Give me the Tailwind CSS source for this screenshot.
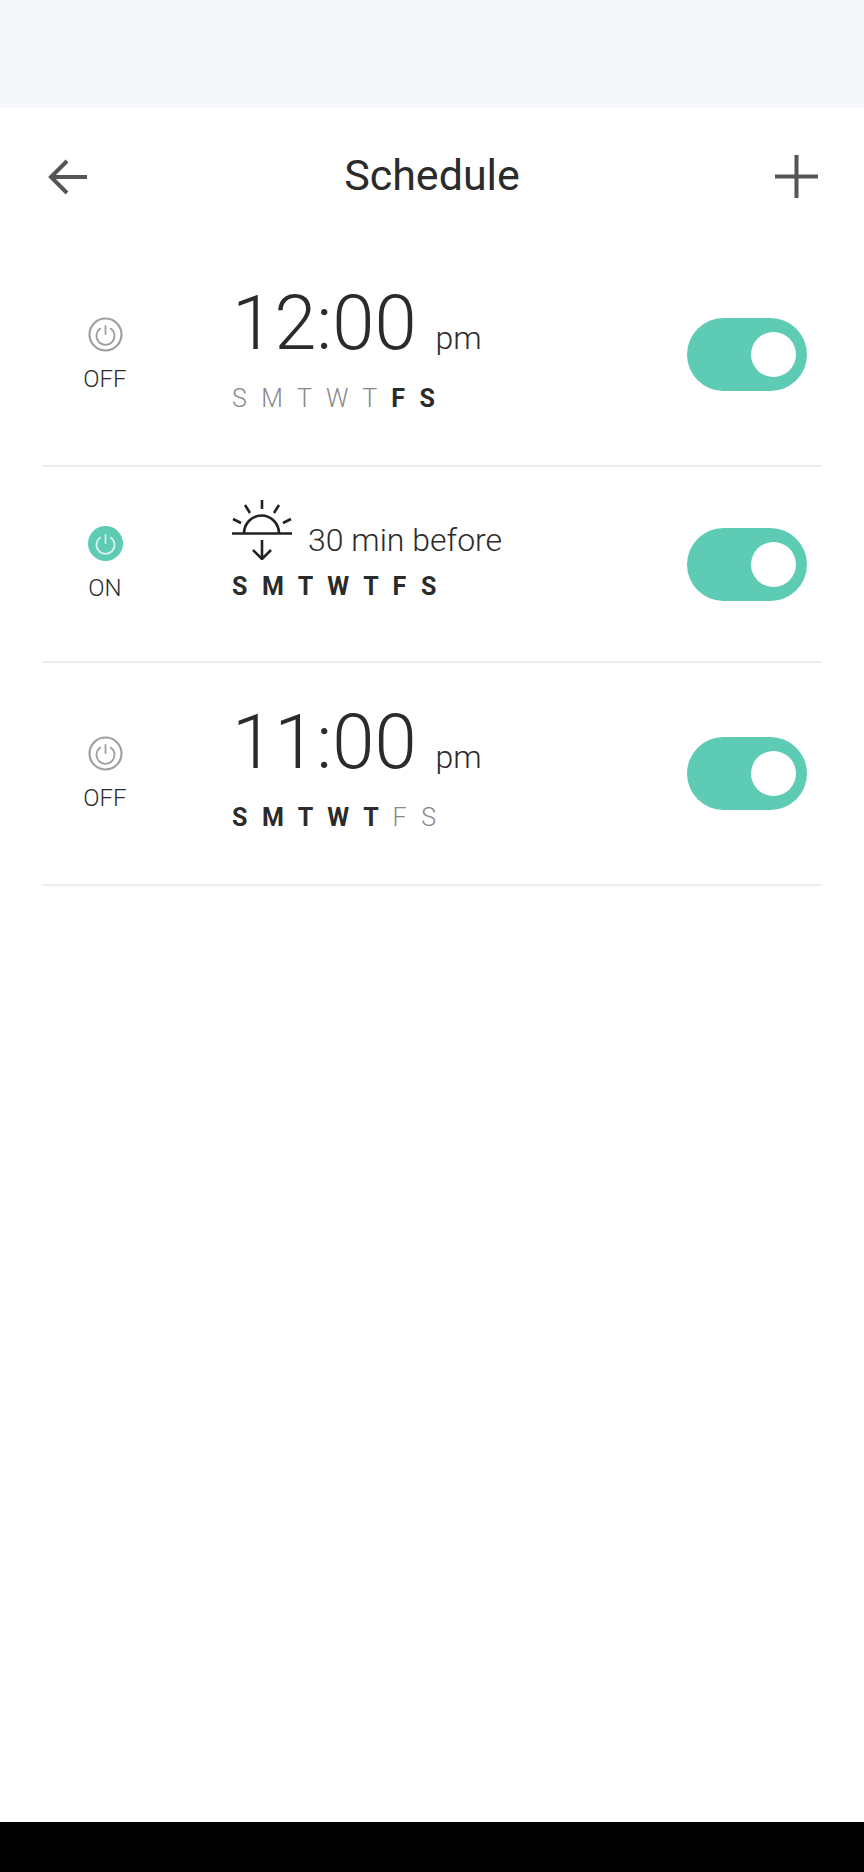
<!doctype html>
<html><head><meta charset="utf-8"><script src="https://cdn.jsdelivr.net/npm/@tailwindcss/browser@4"></script></head>
<body class="bg-white">
<div class="w-[864px] h-[1872px] flex flex-col font-['Roboto',sans-serif] text-[#2b2b2b] bg-white overflow-hidden">
  <div class="h-[108px] bg-[#f5f7fb] shrink-0"></div>
  <header class="h-[136px] shrink-0 relative flex items-start justify-between pl-[48px] pr-[46px] pt-[47px]">
    <svg class="w-[39px] h-[36px] mt-[4px]" viewBox="0 0 39 36" fill="none" stroke="#555" stroke-width="4"><path d="M2 18H39M19 2L3 18L19 34"/></svg>
    <h1 class="absolute left-0 right-0 top-[43px] text-center text-[43px] leading-[48px] font-normal">Schedule</h1>
    <svg class="w-[43px] h-[43px]" viewBox="0 0 43 43" fill="none" stroke="#555" stroke-width="4"><path d="M21.5 0V43M0 21.5H43"/></svg>
  </header>
  <main class="flex flex-col pl-[42px] w-[822px]">
    <section class="h-[223px] flex items-center border-b-2 border-[#eeeeee] pr-[15px]">
      <div class="w-[126px] flex flex-col items-center shrink-0 mt-[2px]">
        <svg class="w-[35px] h-[35px]" viewBox="0 0 35 35" fill="none" stroke="#a0a0a0"><circle cx="17.5" cy="17.5" r="16" stroke-width="2.2"/><path stroke-width="1.8" stroke-linecap="round" d="M17.5 9V17M12.3 11.6A9 9 0 1 0 22.7 11.6"/></svg>
        <span class="mt-[11px] text-[24px] leading-[32px] font-light">OFF</span>
      </div>
      <div class="ml-[64px] flex-1 flex flex-col -mt-[14px]">
        <div class="flex items-baseline h-[86px]"><span class="text-[76px] leading-[86px] font-light">12:00</span><span class="ml-[19px] text-[32px] font-light">pm</span></div>
        <div class="mt-[17px] text-[25px] leading-[32px] tracking-[4.2px] text-[#888] font-light">S M T W T <b class="font-bold text-[#2b2b2b]">F S</b></div>
      </div>
      <div class="w-[120px] h-[73px] rounded-full bg-[#5ecbb5] flex items-center justify-end pr-[11px] shrink-0"><div class="w-[45px] h-[45px] rounded-full bg-white"></div></div>
    </section>
    <section class="h-[196px] flex items-center border-b-2 border-[#eeeeee] pr-[15px]">
      <div class="w-[126px] flex flex-col items-center shrink-0 mt-[2px]">
        <svg class="w-[35px] h-[35px]" viewBox="0 0 35 35" fill="none" stroke="#d6f3ed"><circle cx="17.5" cy="17.5" r="17.5" fill="#5ecbb5" stroke="none"/><path stroke-width="1.8" stroke-linecap="round" d="M17.5 9V17M12.3 11.6A9 9 0 1 0 22.7 11.6"/></svg>
        <span class="mt-[11px] text-[24px] leading-[32px] font-light">ON</span>
      </div>
      <div class="ml-[64px] flex-1 flex flex-col -mt-[25px]">
        <div class="flex items-start h-[60px]">
          <svg class="w-[60px] h-[60px] shrink-0" viewBox="0 0 60 60" fill="none" stroke="#222" stroke-width="2.6"><path d="M0 33.5H60M12 33.5A17.5 18 0 0 1 47 33.5M30 0V9M13 5L18 13M47 5L42 13M1 19L9 23M59 19L51 23M30 40V58M21 50L30 59L39 50"/></svg>
          <span class="ml-[16px] mt-[20px] text-[32px] leading-[40px] font-light">30 min before</span>
        </div>
        <div class="mt-[11px] text-[25px] leading-[32px] tracking-[4.2px] font-bold">S M T W T F S</div>
      </div>
      <div class="w-[120px] h-[73px] rounded-full bg-[#5ecbb5] flex items-center justify-end pr-[11px] shrink-0"><div class="w-[45px] h-[45px] rounded-full bg-white"></div></div>
    </section>
    <section class="h-[223px] flex items-center border-b-2 border-[#eeeeee] pr-[15px]">
      <div class="w-[126px] flex flex-col items-center shrink-0 mt-[2px]">
        <svg class="w-[35px] h-[35px]" viewBox="0 0 35 35" fill="none" stroke="#a0a0a0"><circle cx="17.5" cy="17.5" r="16" stroke-width="2.2"/><path stroke-width="1.8" stroke-linecap="round" d="M17.5 9V17M12.3 11.6A9 9 0 1 0 22.7 11.6"/></svg>
        <span class="mt-[11px] text-[24px] leading-[32px] font-light">OFF</span>
      </div>
      <div class="ml-[64px] flex-1 flex flex-col -mt-[14px]">
        <div class="flex items-baseline h-[86px]"><span class="text-[76px] leading-[86px] font-light">11:00</span><span class="ml-[19px] text-[32px] font-light">pm</span></div>
        <div class="mt-[17px] text-[25px] leading-[32px] tracking-[4.2px] font-bold">S M T W T <span class="font-light text-[#888]">F S</span></div>
      </div>
      <div class="w-[120px] h-[73px] rounded-full bg-[#5ecbb5] flex items-center justify-end pr-[11px] shrink-0"><div class="w-[45px] h-[45px] rounded-full bg-white"></div></div>
    </section>
  </main>
  <div class="flex-1"></div>
  <div class="h-[50px] bg-black shrink-0"></div>
</div>
</body></html>
